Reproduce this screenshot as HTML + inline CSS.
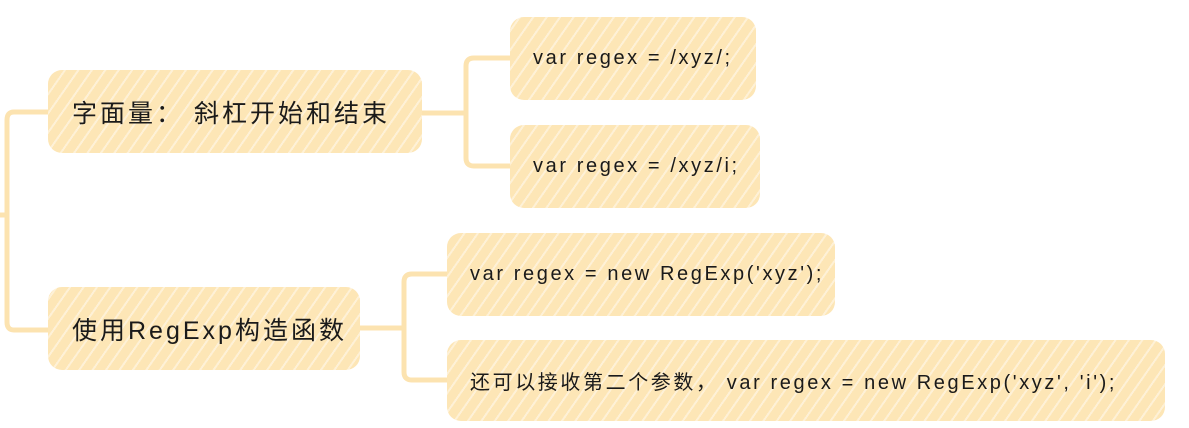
<!DOCTYPE html>
<html><head><meta charset="utf-8"><style>
html,body{margin:0;padding:0;background:#fff;width:1189px;height:428px;overflow:hidden;position:relative;font-family:"Liberation Sans","Noto Sans CJK SC",sans-serif;color:#1a1a1a}
.b{position:absolute;background:#fde6b6;border-radius:14px;display:flex;align-items:center;box-sizing:border-box;white-space:nowrap;
background-image:repeating-linear-gradient(-55deg,rgba(255,255,255,0) 0 9px,rgba(255,255,255,.45) 9px 11px);}
.c{font-size:20px;padding-left:23px;letter-spacing:2.6px}
.m{font-size:25px;padding-left:24px;letter-spacing:3px}
</style></head><body>
<svg width="1189" height="428" style="position:absolute;left:0;top:0" fill="none" stroke="#fce3b0" stroke-width="5" stroke-linecap="round">
<path d="M48 112 H14 Q7 112 7 120 V322 Q7 330 14 330 H48"/>
<path d="M0 215 H7"/>
<path d="M420 113 H466 M510 58 H474 Q466 58 466 66 V158 Q466 166 474 166 H510"/>
<path d="M358 328 H404 M447 274 H412 Q404 274 404 282 V372 Q404 380 412 380 H447"/>
</svg>
<div class="b m" style="left:48px;top:70px;width:374px;height:83px">字面量：&nbsp;斜杠开始和结束</div>
<div class="b m" style="left:48px;top:287px;width:312px;height:83px">使用RegExp构造函数</div>
<div class="b c" style="left:510px;top:17px;width:246px;height:83px">var regex = /xyz/;</div>
<div class="b c" style="left:510px;top:125px;width:250px;height:83px">var regex = /xyz/i;</div>
<div class="b c" style="left:447px;top:233px;width:388px;height:83px">var regex = new RegExp('xyz');</div>
<div class="b c" style="left:447px;top:340px;width:718px;height:81px">还可以接收第二个参数，&nbsp;var regex = new RegExp('xyz', 'i');</div>
</body></html>
